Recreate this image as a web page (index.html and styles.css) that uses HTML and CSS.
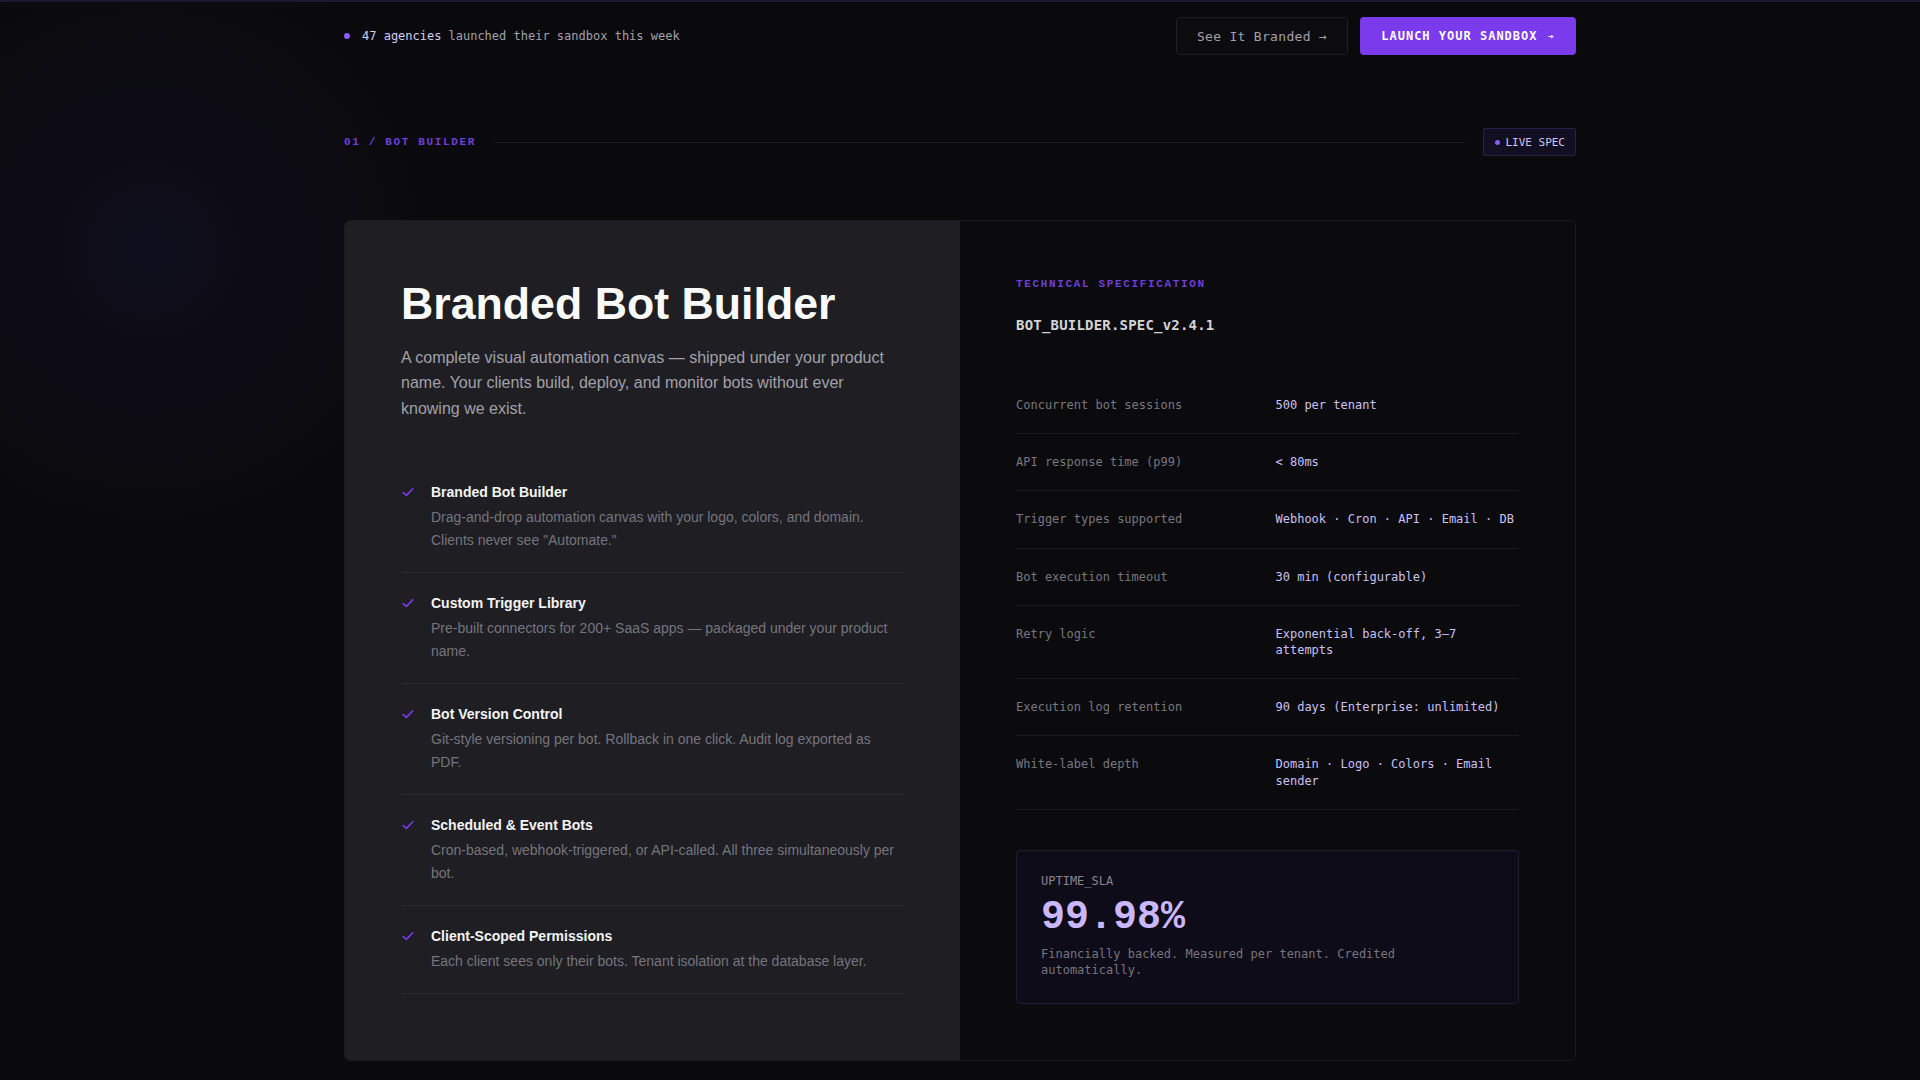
FILE: index.html
```html
<!DOCTYPE html>
<html lang="en">
<head>
<meta charset="utf-8">
<title>Branded Bot Builder</title>
<link rel="stylesheet" href="styles.css">
</head>
<body>
<div class="topline"></div>
<div class="page">
  <header class="topbar">
    <div class="ticker">
      <span class="ticker-dot"></span>
      <span class="ticker-strong">47 agencies</span>
      <span class="ticker-text">launched their sandbox this week</span>
    </div>
    <div class="actions">
      <a class="btn btn-ghost" href="#">See It Branded →</a>
      <a class="btn btn-primary" href="#">LAUNCH YOUR SANDBOX <span class="arrow">➔</span></a>
    </div>
  </header>

  <div class="section-head">
    <span class="section-label">01 / BOT BUILDER</span>
    <span class="section-rule"></span>
    <span class="badge"><span class="badge-dot"></span>LIVE SPEC</span>
  </div>

  <section class="card">
    <div class="panel-left">
      <h1 class="title">Branded Bot Builder</h1>
      <p class="lead">A complete visual automation canvas — shipped under your product name. Your clients build, deploy, and monitor bots without ever knowing we exist.</p>
      <ul class="features">
        <li class="feature">
          <svg class="check" viewBox="0 0 14 14" width="14" height="14"><path d="M2.2 7.6 L5.4 10.4 L11.8 3.8" fill="none" stroke="#7c3aed" stroke-width="1.6" stroke-linecap="round" stroke-linejoin="round"/></svg>
          <div class="feature-body">
            <div class="feature-title">Branded Bot Builder</div>
            <div class="feature-desc">Drag-and-drop automation canvas with your logo, colors, and domain. Clients never see "Automate."</div>
          </div>
        </li>
        <li class="feature">
          <svg class="check" viewBox="0 0 14 14" width="14" height="14"><path d="M2.2 7.6 L5.4 10.4 L11.8 3.8" fill="none" stroke="#7c3aed" stroke-width="1.6" stroke-linecap="round" stroke-linejoin="round"/></svg>
          <div class="feature-body">
            <div class="feature-title">Custom Trigger Library</div>
            <div class="feature-desc">Pre-built connectors for 200+ SaaS apps — packaged under your product name.</div>
          </div>
        </li>
        <li class="feature">
          <svg class="check" viewBox="0 0 14 14" width="14" height="14"><path d="M2.2 7.6 L5.4 10.4 L11.8 3.8" fill="none" stroke="#7c3aed" stroke-width="1.6" stroke-linecap="round" stroke-linejoin="round"/></svg>
          <div class="feature-body">
            <div class="feature-title">Bot Version Control</div>
            <div class="feature-desc">Git-style versioning per bot. Rollback in one click. Audit log exported as PDF.</div>
          </div>
        </li>
        <li class="feature">
          <svg class="check" viewBox="0 0 14 14" width="14" height="14"><path d="M2.2 7.6 L5.4 10.4 L11.8 3.8" fill="none" stroke="#7c3aed" stroke-width="1.6" stroke-linecap="round" stroke-linejoin="round"/></svg>
          <div class="feature-body">
            <div class="feature-title">Scheduled &amp; Event Bots</div>
            <div class="feature-desc">Cron-based, webhook-triggered, or API-called. All three simultaneously per bot.</div>
          </div>
        </li>
        <li class="feature">
          <svg class="check" viewBox="0 0 14 14" width="14" height="14"><path d="M2.2 7.6 L5.4 10.4 L11.8 3.8" fill="none" stroke="#7c3aed" stroke-width="1.6" stroke-linecap="round" stroke-linejoin="round"/></svg>
          <div class="feature-body">
            <div class="feature-title">Client-Scoped Permissions</div>
            <div class="feature-desc">Each client sees only their bots. Tenant isolation at the database layer.</div>
          </div>
        </li>
      </ul>
    </div>

    <div class="panel-right">
      <div class="spec-eyebrow">TECHNICAL SPECIFICATION</div>
      <div class="spec-name">BOT_BUILDER.SPEC_v2.4.1</div>
      <dl class="spec-table">
        <div class="spec-row"><dt>Concurrent bot sessions</dt><dd>500 per tenant</dd></div>
        <div class="spec-row"><dt>API response time (p99)</dt><dd>&lt; 80ms</dd></div>
        <div class="spec-row"><dt>Trigger types supported</dt><dd>Webhook · Cron · API · Email · DB</dd></div>
        <div class="spec-row"><dt>Bot execution timeout</dt><dd>30 min (configurable)</dd></div>
        <div class="spec-row"><dt>Retry logic</dt><dd>Exponential back-off, 3–7 attempts</dd></div>
        <div class="spec-row"><dt>Execution log retention</dt><dd>90 days (Enterprise: unlimited)</dd></div>
        <div class="spec-row"><dt>White-label depth</dt><dd>Domain · Logo · Colors · Email sender</dd></div>
      </dl>
      <div class="sla">
        <div class="sla-label">UPTIME_SLA</div>
        <div class="sla-value">99.98%</div>
        <div class="sla-note">Financially backed. Measured per tenant. Credited automatically.</div>
      </div>
    </div>
  </section>
</div>
</body>
</html>
```

FILE: styles.css
```css
* { box-sizing: border-box; }

html, body {
  margin: 0;
  padding: 0;
}

body {
  min-height: 1080px;
  background-color: #0a0a0c;
  background-image: radial-gradient(circle at 150px 250px, rgba(40, 30, 110, 0.16) 0, rgba(40, 30, 110, 0.08) 140px, rgba(10, 10, 12, 0) 320px);
  color: #e4e4e7;
  font-family: "Liberation Sans", Arial, sans-serif;
  overflow: hidden;
}

.topline {
  height: 2px;
  background: #1a1730;
}

.page {
  width: 1232px;
  margin: 0 auto;
}

/* top bar */
.topbar {
  display: flex;
  align-items: center;
  justify-content: space-between;
  padding-top: 15px;
}

.ticker {
  display: flex;
  align-items: center;
  font-family: "DejaVu Sans Mono", monospace;
  font-size: 12px;
  white-space: pre;
}

.ticker-dot {
  width: 6px;
  height: 6px;
  border-radius: 50%;
  background: #8b5cf6;
  margin-right: 12px;
}

.ticker-strong { color: #d3cdf0; }
.ticker-text { color: #a1a1aa; margin-left: 7px; }

.actions {
  display: flex;
  gap: 12px;
}

.btn {
  display: flex;
  align-items: center;
  height: 38px;
  padding: 0 20px;
  border-radius: 4px;
  text-decoration: none;
  font-family: "DejaVu Sans Mono", monospace;
  white-space: pre;
}

.btn-ghost {
  width: 172px;
  justify-content: center;
  border: 1px solid #1f1f25;
  background: #0c0c0f;
  color: #a1a1aa;
  font-size: 13px;
  letter-spacing: 0.3px;
}

.btn-primary {
  width: 216px;
  justify-content: center;
  background: #7c3aed;
  color: #ffffff;
  font-size: 12px;
  font-weight: bold;
  letter-spacing: 1px;
}

.btn-primary .arrow {
  font-size: 10px;
  margin-left: 2px;
}

/* section header */
.section-head {
  display: flex;
  align-items: center;
  gap: 18px;
  margin-top: 73px;
}

.section-label {
  font-family: "Liberation Mono", "Courier New", monospace;
  font-weight: bold;
  font-size: 11px;
  letter-spacing: 0.15em;
  color: #6d3fd6;
}

.section-rule {
  flex: 1;
  height: 1px;
  background: #1a1a20;
}

.badge {
  display: flex;
  align-items: center;
  gap: 5px;
  height: 28px;
  padding: 0 10px 0 11px;
  border: 1px solid #2a2148;
  background: #130f22;
  border-radius: 2px;
  font-family: "DejaVu Sans Mono", monospace;
  font-size: 11px;
  color: #cfc6f5;
}

.badge-dot {
  width: 5px;
  height: 5px;
  border-radius: 50%;
  background: #8b5cf6;
}

/* card */
.card {
  display: grid;
  grid-template-columns: 615px 1fr;
  margin-top: 64px;
  border: 1px solid #1a1a1f;
  border-radius: 6px;
  overflow: hidden;
  background: #0b0b0e;
}

.panel-left {
  background: #1e1e23;
  padding: 56px 55px 56px 56px;
  border-right: 1px solid #1d1d22;
}

.title {
  margin: 0;
  font-size: 44.7px;
  line-height: 1.2;
  font-weight: bold;
  color: #fafafa;
}

.lead {
  margin: 14px 0 0;
  font-size: 16px;
  line-height: 1.6;
  color: #a1a1aa;
}

.features {
  list-style: none;
  margin: 41px 0 0;
  padding: 0;
}

.feature {
  display: flex;
  gap: 16px;
  padding: 20px 0;
  border-bottom: 1px solid #2a2a30;
}

.check {
  flex: none;
  margin-top: 3px;
}

.feature-title {
  font-size: 14px;
  line-height: 20px;
  font-weight: bold;
  color: #f4f4f5;
}

.feature-desc {
  margin-top: 4px;
  font-size: 14px;
  line-height: 23px;
  color: #75757e;
}

.panel-right {
  padding: 56px;
}

.spec-eyebrow {
  font-family: "Liberation Mono", "Courier New", monospace;
  font-weight: bold;
  font-size: 11px;
  line-height: 14px;
  letter-spacing: 0.15em;
  color: #6d3fd6;
}

.spec-name {
  margin-top: 24px;
  font-family: "DejaVu Sans Mono", monospace;
  font-weight: bold;
  font-size: 14px;
  line-height: 20px;
  letter-spacing: 0.2px;
  color: #d4d4d8;
}

.spec-table {
  margin: 42px 0 0;
}

.spec-row {
  display: grid;
  grid-template-columns: 1fr 1fr;
  gap: 16px;
  padding: 20px 0;
  border-bottom: 1px solid #1b1b21;
  font-family: "DejaVu Sans Mono", monospace;
  font-size: 12px;
  line-height: 16.2px;
}

.spec-row dt {
  color: #77777f;
}

.spec-row dd {
  margin: 0;
  color: #c9c1f2;
}

.sla {
  margin-top: 40px;
  padding: 24px 24px 25px;
  background: #0f0c19;
  border: 1px solid #211b36;
  border-radius: 4px;
}

.sla-label {
  font-family: "DejaVu Sans Mono", monospace;
  font-size: 12px;
  line-height: 12px;
  color: #85858e;
}

.sla-value {
  margin-top: 9px;
  font-family: "Liberation Mono", "Courier New", monospace;
  font-weight: bold;
  font-size: 40px;
  line-height: 44px;
  color: #c9b8ff;
}

.sla-note {
  margin-top: 6px;
  font-family: "DejaVu Sans Mono", monospace;
  font-size: 12px;
  line-height: 16px;
  color: #75757e;
}
```
